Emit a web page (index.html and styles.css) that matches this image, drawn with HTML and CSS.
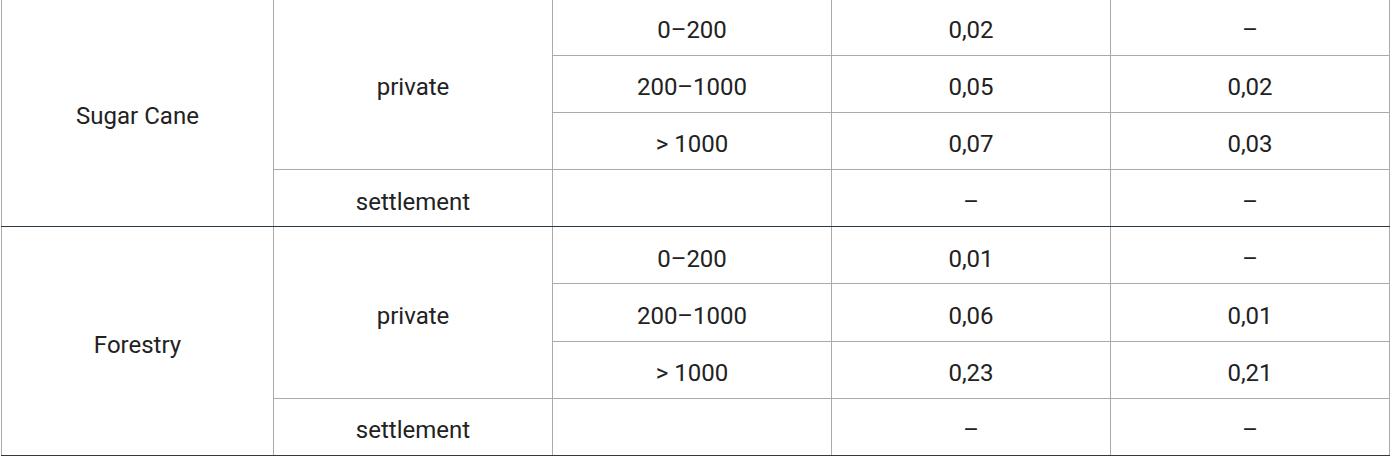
FILE: index.html
```html
<!DOCTYPE html>
<html lang="en">
<head>
<meta charset="utf-8">
<link rel="stylesheet" href="styles.css">
</head>
<body>
<div class="page">
<table class="data">
  <colgroup>
    <col class="c1"><col class="c2"><col class="c3"><col class="c4"><col class="c5">
  </colgroup>
  <tbody class="group">
    <tr class="first"><td rowspan="4" class="last">Sugar Cane</td><td rowspan="3">private</td><td>0–200</td><td>0,02</td><td>–</td></tr>
    <tr><td>200–1000</td><td>0,05</td><td>0,02</td></tr>
    <tr><td>&gt; 1000</td><td>0,07</td><td>0,03</td></tr>
    <tr class="end"><td>settlement</td><td></td><td>–</td><td>–</td></tr>
  </tbody>
  <tbody class="group">
    <tr class="first"><td rowspan="4" class="last">Forestry</td><td rowspan="3">private</td><td>0–200</td><td>0,01</td><td>–</td></tr>
    <tr><td>200–1000</td><td>0,06</td><td>0,01</td></tr>
    <tr><td>&gt; 1000</td><td>0,23</td><td>0,21</td></tr>
    <tr class="end"><td>settlement</td><td></td><td>–</td><td>–</td></tr>
  </tbody>
</table>
</div>
</body>
</html>
```
FILE: styles.css
```css
html, body {
  margin: 0;
  padding: 0;
  background: #fff;
}
.page {
  padding-left: 1px;
  margin-top: -2.6px;
}
.data {
  border-collapse: collapse;
  table-layout: fixed;
  width: 1389px;
  font-family: Roboto, "Liberation Sans", sans-serif;
  font-size: 24px;
  color: #222;
}
.c1 { width: 272px; }
.c2, .c3, .c4, .c5 { width: 279px; }
.data td {
  border: 1px solid #aaa;
  height: 57.2px;
  padding: 7px 10px 0;
  box-sizing: border-box;
  text-align: center;
  vertical-align: middle;
  line-height: 28px;
}
.data .first td {
  border-top: 1px solid #2b3a44;
}
.data .end td,
.data td.last {
  border-bottom: 1px solid #2b3a44;
}
```
